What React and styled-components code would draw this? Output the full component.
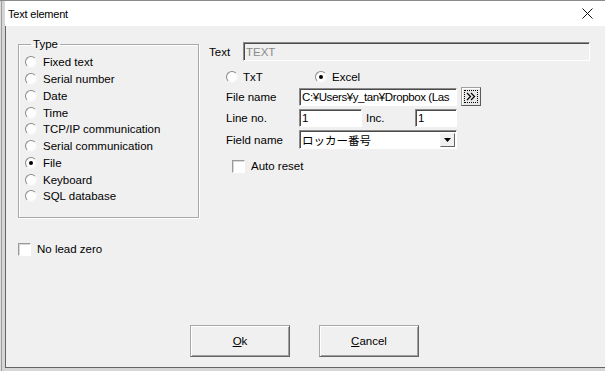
import React from 'react';
import styled, { createGlobalStyle } from "styled-components";

const GlobalStyle = createGlobalStyle`
  html, body {
    margin: 0;
    padding: 0;
    background: #f0f0f0;
  }
  body {
    font-family: "Liberation Sans", Arial, sans-serif;
    font-size: 11.5px;
    color: #000;
  }
`;

const Frame = styled.div`
  width: 605px;
  height: 371px;
  box-sizing: border-box;
  display: flex;
  flex-direction: column;
  padding: 0 0 3px 5px;
  border-top: 1px solid #8a8a8a;
  background: linear-gradient(to right, #dedede 1px, #9c9c9c 1px, #9c9c9c 2px, #d6d6d6 2px);
  overflow: hidden;
`;

const TitleBar = styled.div`
  height: 25px;
  background: #fff;
  display: flex;
  align-items: center;
  justify-content: space-between;
  padding: 0 12px 0 3px;
  flex-shrink: 0;
`;

const Title = styled.span`
  font-size: 11px;
  letter-spacing: -0.2px;
`;

const Body = styled.div`
  flex: 1;
  display: flex;
  flex-direction: column;
  background: #f0f0f0;
  border-left: 1px solid #646464;
  border-bottom: 1px solid #646464;
  padding: 11px 0 10px 12px;
`;

const Main = styled.div`
  display: flex;
  gap: 10px;
`;

const LeftColumn = styled.div`
  display: flex;
  flex-direction: column;
`;

const Group = styled.fieldset`
  margin: 0;
  width: 181px;
  height: 181px;
  box-sizing: border-box;
  border: 1px solid #a9a9a9;
  box-shadow: inset 1px 1px #fff, 1px 1px #fff;
  padding: 3px 0 0 6px;
`;

const Legend = styled.legend`
  padding: 0 2px;
  margin-left: 6px;
  line-height: 14px;
`;

const TypeRow = styled.label`
  display: flex;
  align-items: center;
  gap: 6px;
  height: 16.75px;
`;

const Radio = styled.span`
  width: 12px;
  height: 12px;
  box-sizing: border-box;
  border-radius: 50%;
  border: 1px solid;
  border-color: #8a8a8a #f4f4f4 #f4f4f4 #8a8a8a;
  background: #fdfdfd;
  display: flex;
  align-items: center;
  justify-content: center;
  flex-shrink: 0;

  &::after {
    content: "";
    width: 4px;
    height: 4px;
    border-radius: 50%;
    background: ${props => props.checked ? "#000" : "transparent"};
  }
`;

const Check = styled.span`
  width: 13px;
  height: 13px;
  box-sizing: border-box;
  border: 1px solid;
  border-color: #9a9a9a #fff #fff #9a9a9a;
  box-shadow: inset 1px 1px #d8d8d8;
  background: #fff;
  flex-shrink: 0;
`;

const CheckRow = styled.label`
  display: flex;
  align-items: center;
  gap: 6px;
  height: 16px;
  margin-top: ${props => props.top || 0}px;
  margin-left: ${props => props.left || 0}px;
`;

const RightColumn = styled.div`
  display: flex;
  flex-direction: column;
  padding-top: 5px;
`;

const Row = styled.div`
  display: flex;
  align-items: center;
  margin-top: ${props => props.top || 0}px;
  margin-left: ${props => props.left || 0}px;
`;

const Label = styled.span`
  width: ${props => props.width}px;
  box-sizing: border-box;
  padding-left: ${props => props.pad || 0}px;
  flex-shrink: 0;
`;

const Field = styled.div`
  width: ${props => props.width}px;
  height: ${props => props.height || 18}px;
  box-sizing: border-box;
  border: 1px solid;
  border-color: #8c8c8c #fff #fff #8c8c8c;
  box-shadow: inset 1px 1px #4a4a4a;
  background: ${props => props.disabled ? "#f0f0f0" : "#fff"};
  color: ${props => props.disabled ? "#8a8a8a" : "#000"};
  padding: 0 0 0 2px;
  display: flex;
  align-items: center;
  white-space: nowrap;
  overflow: hidden;
  font-size: 11.5px;
  letter-spacing: ${props => props.tight ? "-0.4px" : "0"};
`;

const ComboText = styled.span`
  flex: 1;
  font-family: "Noto Sans CJK JP", sans-serif;
  font-size: 11.5px;
`;

const DropButton = styled.span`
  width: 15px;
  height: 14px;
  box-sizing: border-box;
  border: 1px solid;
  border-color: #f4f4f4 #646464 #646464 #f4f4f4;
  background: #f0f0f0;
  display: flex;
  align-items: center;
  justify-content: center;
  margin-right: 1px;
`;

const RadioItem = styled.label`
  display: flex;
  align-items: center;
  gap: 5px;
  width: ${props => props.width}px;
  height: 16px;
`;

const BrowseButton = styled.button`
  width: 20px;
  height: 19px;
  margin-left: 4px;
  padding: 2px;
  box-sizing: border-box;
  border: 1px solid;
  border-color: #a0a0a0 #5a5a5a #5a5a5a #a0a0a0;
  box-shadow: inset 1px 1px #fff;
  background: #e8e8e8;
  display: flex;
  align-items: stretch;
`;

const Focus = styled.span`
  flex: 1;
  border: 1px dotted #000;
  display: flex;
  align-items: center;
  justify-content: center;
`;

const ButtonRow = styled.div`
  margin-top: auto;
  display: flex;
  gap: 29px;
  padding-left: 172px;
`;

const Button = styled.button`
  width: 100px;
  height: 32px;
  box-sizing: border-box;
  border: 1px solid;
  border-color: #a8a8a8 #646464 #646464 #a8a8a8;
  box-shadow: inset 1px 1px #fff, inset -1px -1px #a0a0a0;
  background: #f0f0f0;
  font-family: "Liberation Sans", Arial, sans-serif;
  font-size: 11.5px;
  color: #000;
  padding: 0;
`;

const types = [
  "Fixed text",
  "Serial number",
  "Date",
  "Time",
  "TCP/IP communication",
  "Serial communication",
  "File",
  "Keyboard",
  "SQL database",
];

function App() {
  return (
    <>
      <GlobalStyle />
      <Frame>
        <TitleBar>
          <Title>Text element</Title>
          <svg width="11" height="11" viewBox="0 0 11 11">
            <path d="M0.5 0.5 L10.5 10.5 M10.5 0.5 L0.5 10.5" stroke="#111" strokeWidth="1" fill="none" />
          </svg>
        </TitleBar>
        <Body>
          <Main>
            <LeftColumn>
              <Group>
                <Legend>Type</Legend>
                {types.map(t => (
                  <TypeRow key={t}>
                    <Radio checked={t === "File"} />
                    {t}
                  </TypeRow>
                ))}
              </Group>
              <CheckRow top={23}>
                <Check />
                No lead zero
              </CheckRow>
            </LeftColumn>

            <RightColumn>
              <Row>
                <Label width={34}>Text</Label>
                <Field width={347} height={19} disabled>TEXT</Field>
              </Row>
              <Row top={8} left={17}>
                <RadioItem width={89}>
                  <Radio />
                  TxT
                </RadioItem>
                <RadioItem width={80}>
                  <Radio checked />
                  Excel
                </RadioItem>
              </Row>
              <Row top={2} left={17}>
                <Label width={73}>File name</Label>
                <Field width={158} tight>C:¥Users¥y_tan¥Dropbox (Las</Field>
                <BrowseButton>
                  <Focus>
                    <svg width="10" height="9" viewBox="0 0 10 9">
                      <path d="M1 1 L4.5 4.5 L1 8 M5 1 L8.5 4.5 L5 8" stroke="#000" strokeWidth="1.2" fill="none" />
                    </svg>
                  </Focus>
                </BrowseButton>
              </Row>
              <Row top={3} left={17}>
                <Label width={73}>Line no.</Label>
                <Field width={63}>1</Field>
                <Label width={53} pad={4}>Inc.</Label>
                <Field width={42}>1</Field>
              </Row>
              <Row top={3} left={17}>
                <Label width={73}>Field name</Label>
                <Field width={158} height={19}>
                  <ComboText>ロッカー番号</ComboText>
                  <DropButton>
                    <svg width="7" height="4" viewBox="0 0 7 4">
                      <path d="M0 0 L7 0 L3.5 4 Z" fill="#000" />
                    </svg>
                  </DropButton>
                </Field>
              </Row>
              <CheckRow top={9} left={23}>
                <Check />
                Auto reset
              </CheckRow>
            </RightColumn>
          </Main>

          <ButtonRow>
            <Button><u>O</u>k</Button>
            <Button><u>C</u>ancel</Button>
          </ButtonRow>
        </Body>
      </Frame>
    </>
  );
}

export default App;
